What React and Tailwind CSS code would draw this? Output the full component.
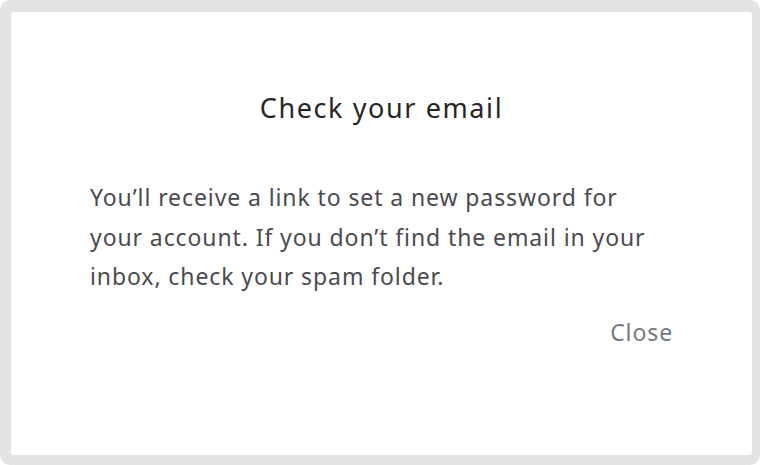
import React from "react";

export default function App() {
  return (
    <div className="w-[760px] h-[465px] bg-white overflow-hidden">
      <div className="w-full h-full rounded-[10px] bg-[#e3e3e3] pt-[12px] pl-[11px] pr-[8px] pb-[10px]">
        <div
          className="h-full bg-white rounded-[3px] px-[79px] pt-[78px] flex flex-col"
          style={{ fontFamily: '"Noto Sans", "Open Sans", sans-serif' }}
        >
          <h2 className="text-center text-[27px] leading-[36px] tracking-[1.6px] text-[#262626]">
            Check your email
          </h2>
          <p className="mt-[52px] text-[23px] leading-[39.5px] tracking-[0.9px] text-[#4a4a4f]">
            You’ll receive a link to set a new password for your account. If you don’t find the
            email in your inbox, check your spam folder.
          </p>
          <div className="mt-[19px] flex justify-end">
            <button className="text-[23px] leading-[32px] tracking-[0.9px] text-[#767a80]">Close</button>
          </div>
        </div>
      </div>
    </div>
  );
}
